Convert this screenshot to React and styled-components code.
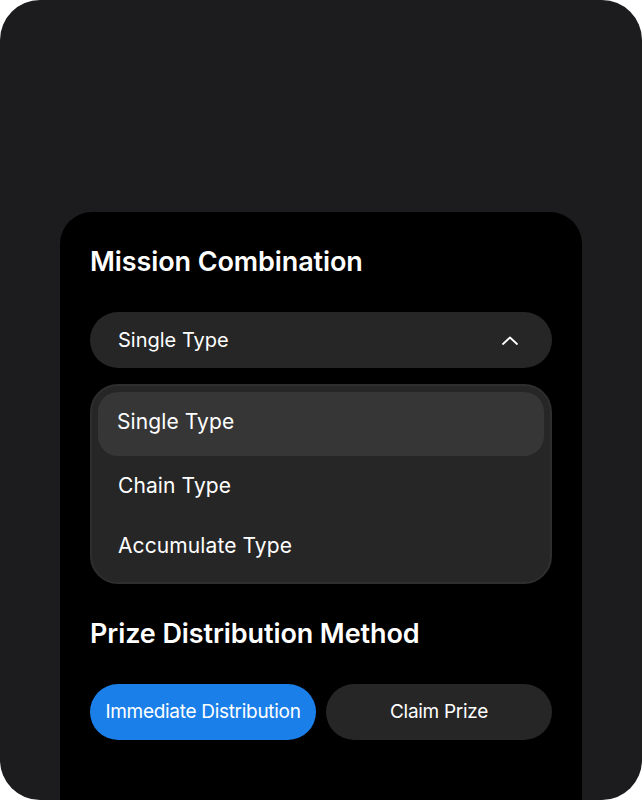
import React from "react";
import styled, { createGlobalStyle } from "styled-components";

const Global = createGlobalStyle`
  html, body { margin: 0; padding: 0; background: #ffffff; }
  body { font-family: "Inter", "Roboto", sans-serif; -webkit-font-smoothing: antialiased; }
`;

const Frame = styled.div`
  width: 642px;
  height: 800px;
  background: #1c1c1e;
  border-radius: 40px;
  overflow: hidden;
  box-sizing: border-box;
  padding: 212px 60px 0;
`;

const Card = styled.div`
  background: #000000;
  border-radius: 32px;
  height: 640px;
  box-sizing: border-box;
  padding: 34px 30px 0;
  display: flex;
  flex-direction: column;
`;

const Heading = styled.h2`
  margin: 0;
  color: #ffffff;
  font-size: 27px;
  font-weight: 600;
  letter-spacing: -0.1px;
  line-height: 32px;
`;

const Select = styled.div`
  margin-top: 34px;
  height: 56px;
  border-radius: 28px;
  background: #262626;
  display: flex;
  align-items: center;
  justify-content: space-between;
  padding: 0 33px 0 28px;
  color: #ffffff;
  font-size: 20px;
`;

const Menu = styled.div`
  margin-top: 16px;
  border-radius: 28px;
  background: #262626;
  border: 2px solid #2e2e2e;
  padding: 6px 6px 6px;
  display: flex;
  flex-direction: column;
`;

const Option = styled.div`
  height: ${(p) => (p.$first ? "64px" : "60px")};
  box-sizing: border-box;
  padding-bottom: ${(p) => (p.$first ? "6px" : "2px")};
  border-radius: 20px;
  background: ${(p) => (p.$active ? "#363636" : "transparent")};
  display: flex;
  align-items: center;
  padding-left: ${(p) => (p.$active ? "19px" : "20px")};
  color: #ffffff;
  font-size: 21px;
  letter-spacing: 0.1px;
`;

const SectionHeading = styled(Heading)`
  margin-top: 34px;
`;

const ButtonRow = styled.div`
  margin-top: 34px;
  display: grid;
  grid-template-columns: 1fr 1fr;
  gap: 10px;
`;

const Choice = styled.button`
  height: 56px;
  border: none;
  border-radius: 28px;
  background: ${(p) => (p.$selected ? "#1a7fe9" : "#262626")};
  color: #ffffff;
  font-family: inherit;
  font-size: 19px;
  letter-spacing: -0.3px;
  padding: 0 0 2px;
`;

const Chevron = () => (
  <svg width="18" height="11" viewBox="0 0 18 11" fill="none">
    <path d="M2 9 L9 2.5 L16 9" stroke="#ffffff" strokeWidth="1.8" strokeLinecap="round" strokeLinejoin="round" />
  </svg>
);

export default function App() {
  return (
    <>
      <Global />
      <Frame>
        <Card>
          <Heading>Mission Combination</Heading>
          <Select>
            <span>Single Type</span>
            <Chevron />
          </Select>
          <Menu>
            <Option $active $first>Single Type</Option>
            <Option>Chain Type</Option>
            <Option>Accumulate Type</Option>
          </Menu>
          <SectionHeading>Prize Distribution Method</SectionHeading>
          <ButtonRow>
            <Choice $selected>Immediate Distribution</Choice>
            <Choice>Claim Prize</Choice>
          </ButtonRow>
        </Card>
      </Frame>
    </>
  );
}
